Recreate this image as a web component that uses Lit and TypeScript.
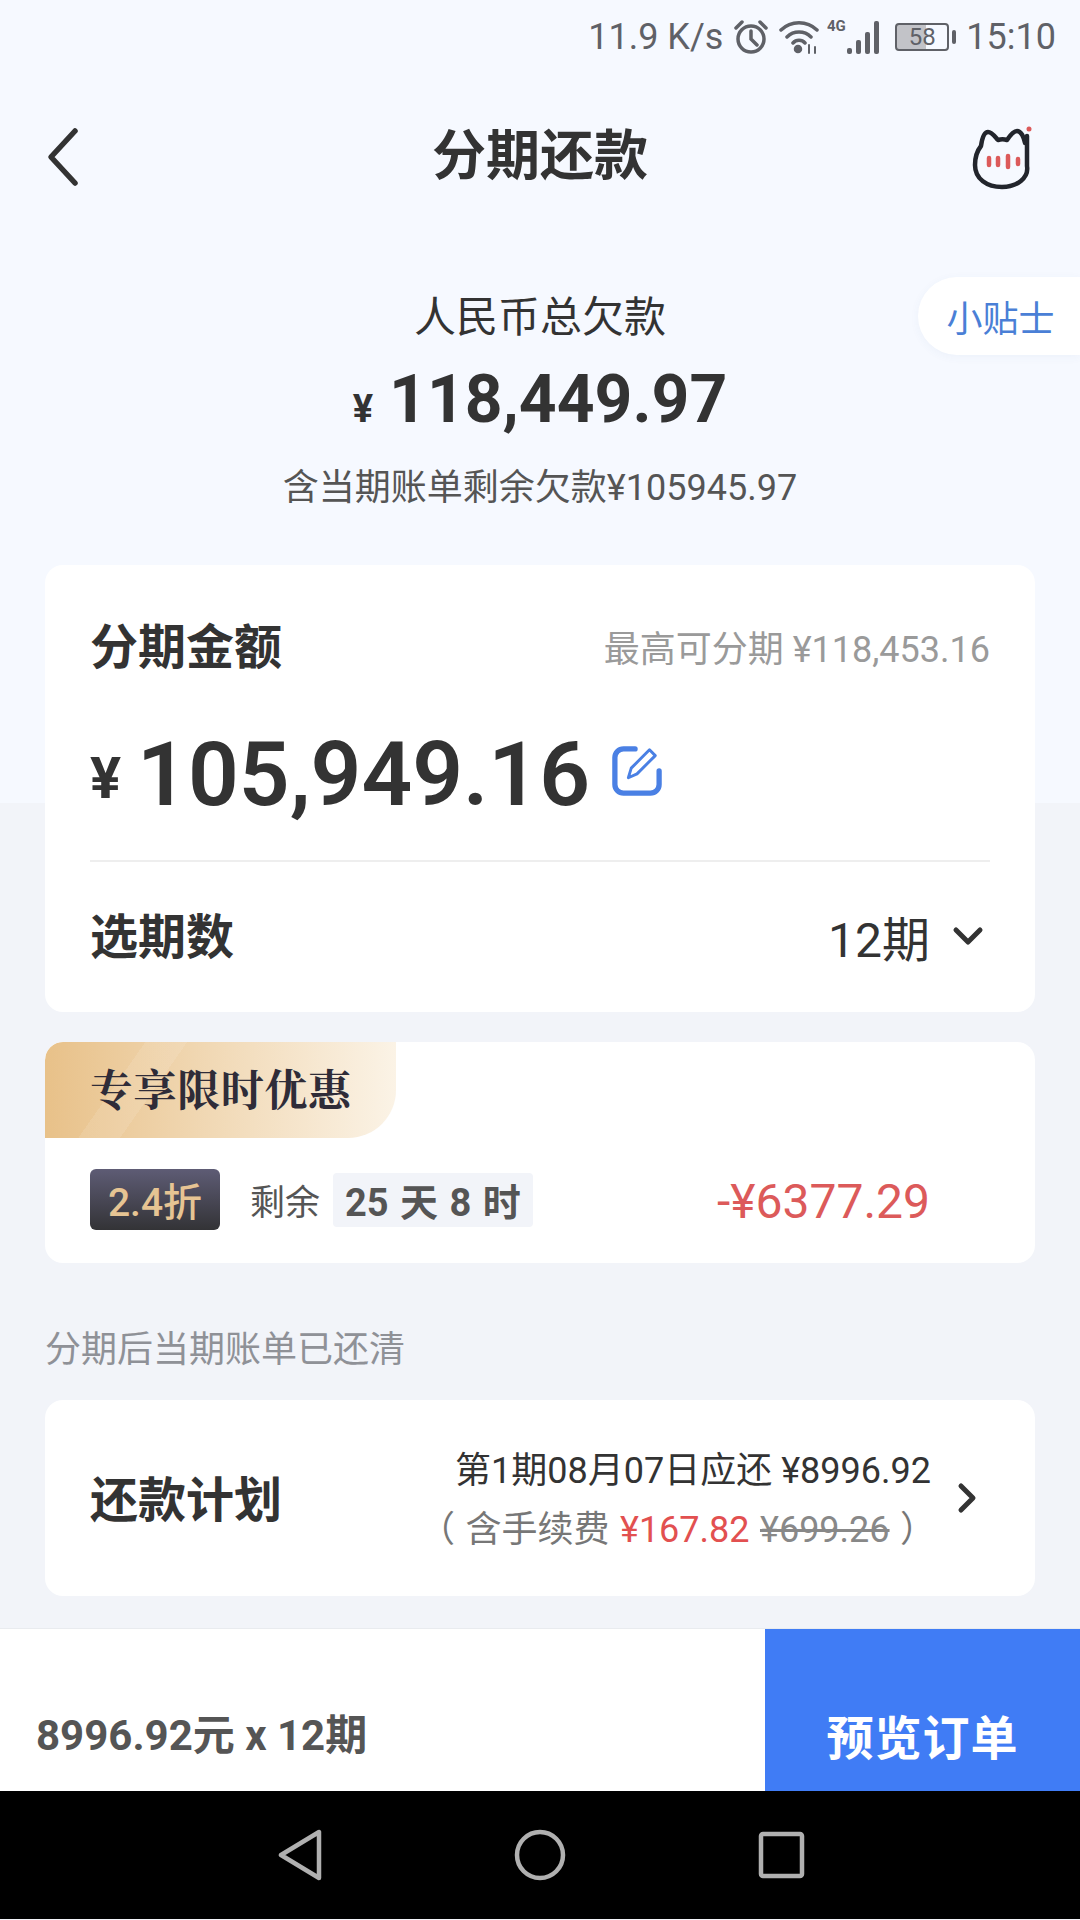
import { LitElement, html, css } from "lit";
import { customElement } from "lit/decorators.js";

@customElement("app-root")
export class AppRoot extends LitElement {
  static styles = css`
    :host { display: block; width: 1080px; height: 1920px; overflow: hidden; position: relative; font-family: Roboto, "Noto Sans CJK SC", sans-serif; color: #333; background: linear-gradient(#f6f9ff 0 803px, #f2f4f9 803px); }
    .page { display: flex; flex-direction: column; height: 1920px; }
    .status { height: 74px; display: flex; align-items: center; justify-content: flex-end; gap: 10px; padding-right: 24px; color: #5f6167; font-size: 36px; box-sizing: border-box; }
    .status svg { display: block; }
    .sig { margin-left: -4px; }
    .batt { width: 54px; height: 28px; box-sizing: border-box; border: 2px solid #5f6167; border-radius: 4px; font-size: 24px; line-height: 24px; text-align: center; background: linear-gradient(90deg, #c2c3c8 58%, transparent 58%); }
    .bw { display: flex; align-items: center; gap: 3px; margin-left: 2px; }
    .nub { width: 4px; height: 14px; background: #5f6167; border-radius: 2px; }
    .nav { height: 166px; display: grid; grid-template-columns: 1fr auto 1fr; align-items: center; padding: 0 44px; box-sizing: border-box; }
    .nav h1 { margin: 0; font-size: 54px; font-weight: 700; color: #333; line-height: 1; }
    .cat { justify-self: end; margin-right: -3px; }
    .sum { display: flex; flex-direction: column; align-items: center; height: 325px; padding-top: 48px; box-sizing: border-box; position: relative; }
    .s1 { font-size: 42px; line-height: 60px; color: #333; }
    .s2 { display: flex; align-items: baseline; gap: 16px; font-weight: 700; font-size: 66px; line-height: 92px; margin-top: 6px; }
    .s2 small { font-size: 38px; }
    .s3 { font-size: 36px; line-height: 50px; color: #555; margin-top: 8px; }
    .tip { position: absolute; right: 0; top: 37px; width: 162px; height: 78px; background: #fff; border-radius: 39px 0 0 39px; display: flex; align-items: center; justify-content: center; color: #4a7fd6; font-size: 36px; box-shadow: 0 2px 10px rgba(60,90,160,.05); padding-left: 3px; box-sizing: border-box; }
    .card { background: #fff; border-radius: 18px; margin: 0 45px; }
    .c1 { height: 447px; padding: 0 45px; box-sizing: border-box; display: flex; flex-direction: column; }
    .row { display: flex; align-items: center; justify-content: space-between; }
    .t { font-size: 48px; font-weight: 700; color: #333; line-height: 1; }
    .hd { height: 166px; box-sizing: border-box; }
    .max { font-size: 36px; color: #9a9a9a; margin-top: -4px; }
    .big { display: flex; align-items: center; height: 126px; border-bottom: 2px solid #eeeeee; padding-bottom: 23px; margin-top: -20px; }
    .yen { font-size: 58px; font-weight: 700; margin-right: 16px; margin-top: 8px; }
    .num { font-size: 89px; font-weight: 600; line-height: 1; color: #333; }
    .pen { margin-left: 22px; margin-top: -6px; }
    .per { flex: 1; padding-top: 2px; }
    .rv { display: flex; align-items: center; gap: 22px; font-size: 48px; color: #333; padding: 0 6px 4px 0; }
    .c2 { margin-top: 30px; height: 221px; overflow: hidden; }
    .ban { width: 351px; height: 96px; border-radius: 18px 0 48px 0; background: linear-gradient(125deg, transparent 24%, rgba(255,255,255,.1) 24% 34%, transparent 34%), linear-gradient(90deg, #e8c189, #fbf3e6); display: flex; align-items: center; padding: 0 0 6px 45px; box-sizing: border-box; font-family: "Noto Serif CJK SC", "Liberation Serif", "Noto Sans CJK SC", serif; font-weight: 700; font-size: 43px; letter-spacing: 0.6px; color: #2f2c38; }
    .off { display: flex; align-items: center; padding: 31px 45px 0; }
    .tag { width: 130px; height: 61px; border-radius: 6px; background: linear-gradient(#5e5c75, #333336); color: #e6c493; font-size: 39px; display: flex; align-items: center; justify-content: center; font-weight: 500; padding-bottom: 2px; box-sizing: border-box; }
    .rem { margin-left: 30px; font-size: 35px; color: #555; }
    .cd { margin-left: 13px; background: #f2f4f9; border-radius: 4px; height: 54px; padding: 0 12px; display: flex; align-items: center; font-size: 38px; font-weight: 700; color: #555; word-spacing: 2px; }
    .red { margin: 3px 60px 0 auto; font-size: 48px; color: #dc5a5a; }
    .hint { margin: 65px 45px 0; font-size: 36px; color: #8f9197; line-height: 44px; }
    .c3 { margin-top: 28px; height: 196px; padding: 0 45px; box-sizing: border-box; display: flex; align-items: center; }
    .c3 .t { margin-top: 6px; }
    .pl { margin-left: auto; display: flex; flex-direction: column; align-items: flex-end; padding-top: 6px; }
    .pl div { line-height: 59px; }
    .p1 { font-size: 36px; color: #333; }
    .p2 { font-size: 36px; color: #777; word-spacing: 1.5px; margin-right: -5px; }
    .p2 b { font-weight: 400; color: #e25050; }
    .p2 s { color: #888; }
    .arr { margin-left: 25px; margin-right: 12px; }
    .foot { margin-top: 32px; height: 163px; background: #fff; border-top: 1px solid #e9ebef; box-sizing: border-box; display: flex; justify-content: space-between; }
    .ft { align-self: flex-end; padding: 0 0 26px 36px; font-size: 42px; font-weight: 700; color: #555; line-height: 58px; }
    .btn { width: 315px; background: #407cf5; color: #fff; font-size: 47px; font-weight: 700; display: flex; align-items: flex-end; justify-content: center; padding-bottom: 22px; box-sizing: border-box; letter-spacing: 1px; }
    .sys { height: 128px; background: #000; display: flex; align-items: center; justify-content: center; }
    .sys svg { display: block; }
  `;

  render() {
    return html`<div class="page">
      <div class="status">
        <span>11.9 K/s</span>
        <svg width="36" height="36" viewBox="0 0 36 36" fill="none" stroke="#5f6167" stroke-width="3.5"><circle cx="18" cy="20" r="13"/><path d="M18 12v8l6 6M3 9l6-6M33 9l-6-6" stroke-linecap="round"/></svg>
        <svg width="42" height="36" viewBox="0 0 42 36" fill="none" stroke="#5f6167" stroke-width="3.5" stroke-linecap="round"><path d="M2 11a26 26 0 0 1 36 0M8 18a17 17 0 0 1 24 0M14 24a8 8 0 0 1 12 0"/><circle cx="19" cy="30" r="2.5" fill="#5f6167"/><path d="M30 26v8M36 28v6" stroke-width="2"/></svg>
        <svg class="sig" width="56" height="38" viewBox="0 0 56 38" fill="#5f6167"><text x="0" y="13" font-size="15" font-weight="700" font-family="Roboto">4G</text><rect x="20" y="30" width="5" height="6" rx="2"/><rect x="29" y="22" width="5" height="14" rx="2"/><rect x="38" y="14" width="5" height="22" rx="2"/><rect x="47" y="3" width="5" height="33" rx="2"/></svg>
        <span class="bw"><span class="batt">58</span><span class="nub"></span></span>
        <span>15:10</span>
      </div>
      <div class="nav">
        <svg width="36" height="60" viewBox="0 0 36 60" fill="none" stroke="#333" stroke-width="5.5" stroke-linecap="round" stroke-linejoin="round"><path d="M31 4 7 30l24 26"/></svg>
        <h1>分期还款</h1>
        <svg class="cat" width="70" height="66" viewBox="0 0 64 66" fill="none"><path d="M55 12v30c2 12-10 21-25 21S3 55 3 41c0-8 2-14 6-19 1-7 3-14 7-14s8 6 10 8c3-1 6-1 9 0 2-3 6-9 10-9s7 6 8 12" stroke="#22252c" stroke-width="4.5" stroke-linecap="round" stroke-linejoin="round"/><path d="M17 34v7M26 34v7M36 32v11M46 35v5" stroke="#dc5a5a" stroke-width="4.5" stroke-linecap="round"/><circle cx="57" cy="5" r="2.5" fill="#dc5a5a"/></svg>
      </div>
      <div class="sum">
        <div class="s1">人民币总欠款</div>
        <div class="s2"><small>¥</small>118,449.97</div>
        <div class="s3">含当期账单剩余欠款¥105945.97</div>
        <div class="tip">小贴士</div>
      </div>
      <div class="card c1">
        <div class="row hd"><span class="t">分期金额</span><span class="max">最高可分期 ¥118,453.16</span></div>
        <div class="big"><span class="yen">¥</span><span class="num">105,949.16</span>
          <svg class="pen" width="50" height="50" viewBox="0 0 52 52" fill="none" stroke="#4a80e4" stroke-linecap="round" stroke-linejoin="round"><path d="M24 3H12a9 9 0 0 0-9 9v28a9 9 0 0 0 9 9h28a9 9 0 0 0 9-9V26" stroke-width="5.5"/><path d="M17 33l3-10L39 4l6 6-19 19z" stroke-width="3"/></svg>
        </div>
        <div class="row per"><span class="t">选期数</span><span class="rv">12期
          <svg width="32" height="20" viewBox="0 0 32 20" fill="none" stroke="#333" stroke-width="5" stroke-linecap="round" stroke-linejoin="round"><path d="M4 4l12 12L28 4"/></svg></span></div>
      </div>
      <div class="card c2">
        <div class="ban">专享限时优惠</div>
        <div class="off"><span class="tag">2.4折</span><span class="rem">剩余</span><span class="cd">25 天 8 时</span><span class="red">-¥6377.29</span></div>
      </div>
      <div class="hint">分期后当期账单已还清</div>
      <div class="card c3">
        <span class="t">还款计划</span>
        <div class="pl"><div class="p1">第1期08月07日应还 ¥8996.92</div><div class="p2">（ 含手续费 <b>¥167.82</b> <s>¥699.26</s> ）</div></div>
        <svg class="arr" width="22" height="32" viewBox="0 0 22 32" fill="none" stroke="#333" stroke-width="5" stroke-linecap="round" stroke-linejoin="round"><path d="M5 4l12 12L5 28"/></svg>
      </div>
      <div class="foot"><span class="ft">8996.92元 x 12期</span><div class="btn">预览订单</div></div>
      <div class="sys">
        <svg width="540" height="52" viewBox="270 0 540 52" fill="none" stroke="#b0b0b0" stroke-width="4.5" stroke-linejoin="round"><path d="M319 3v46L281 26z"/><circle cx="540" cy="26" r="23"/><rect x="761" y="5" width="41" height="42" rx="2"/></svg>
      </div>
    </div>`;
  }
}
